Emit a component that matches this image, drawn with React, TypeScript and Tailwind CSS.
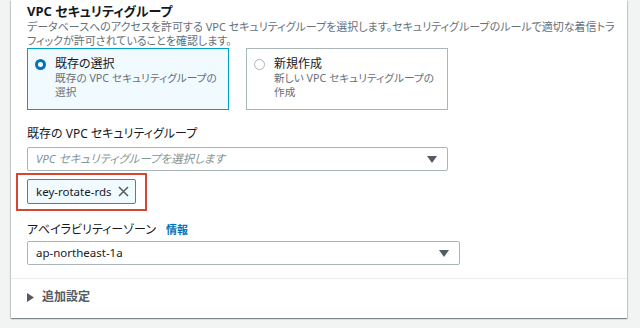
import React from 'react';

const Radio = ({ checked }: { checked: boolean }) => (
  <span
    className={`mt-[3px] w-[11px] h-[11px] shrink-0 rounded-full bg-white ${
      checked ? 'border-[3px] border-[#0073bb]' : 'border border-[#aab7b8]'
    }`}
  />
);

const Caret = () => (
  <svg width="10" height="7" viewBox="0 0 10 7" className="shrink-0">
    <path d="M0 0h10L5 7z" fill="#545b64" />
  </svg>
);

const App = () => {
  return (
    <div className="w-[640px] h-[328px] overflow-hidden bg-[#f2f3f3] pl-[11px] font-['Noto_Sans','Noto_Sans_CJK_JP',sans-serif] [font-feature-settings:'palt']">
      <div className="w-[616px] h-[318px] bg-white shadow-[0_1px_1px_0_rgba(0,28,36,0.3),1px_1px_1px_0_rgba(0,28,36,0.15),-1px_1px_1px_0_rgba(0,28,36,0.15)] flex flex-col">
        <div className="px-4 pt-[2px]">
          {/* VPC security group */}
          <div className="text-[13px] leading-[18px] font-bold text-[#16191f]">VPC セキュリティグループ</div>
          <div className="text-[11px] leading-[14px] text-[#687078] whitespace-nowrap">
            データベースへのアクセスを許可する VPC セキュリティグループを選択します。セキュリティグループのルールで適切な着信トラ
            <br />
            フィックが許可されていることを確認します。
          </div>

          <div className="flex gap-[17px]">
            <div className="w-[202px] h-[62px] border border-[#00a1c9] bg-[#f1faff] flex gap-[9px] pl-[7px] pt-[7px]">
              <Radio checked />
              <div className="whitespace-nowrap">
                <div className="text-[12px] leading-[15px] text-[#16191f]">既存の選択</div>
                <div className="text-[10.7px] leading-[14px] text-[#687078]">既存の VPC セキュリティグループの<br />選択</div>
              </div>
            </div>
            <div className="w-[202px] h-[62px] border border-[#aab7b8] bg-white flex gap-[9px] pl-[7px] pt-[7px]">
              <Radio checked={false} />
              <div className="whitespace-nowrap">
                <div className="text-[12px] leading-[15px] text-[#16191f]">新規作成</div>
                <div className="text-[10.7px] leading-[14px] text-[#687078]">新しい VPC セキュリティグループの<br />作成</div>
              </div>
            </div>
          </div>

          {/* existing group select */}
          <div className="text-[12px] leading-[16px] text-[#16191f] mt-[16px]">既存の VPC セキュリティグループ</div>
          <div className="w-[421px] h-[24px] mt-[5px] border border-[#aab7b8] rounded-[2px] flex items-center justify-between pl-[8px] pr-[10px]">
            <span className="text-[11.5px] italic text-[#879596]">VPC セキュリティグループを選択します</span>
            <Caret />
          </div>

          <div className="ml-[-11px] mt-[2px] w-[131px] border-2 border-[#d6472f] pl-[9px] pt-[4px] pb-[5px]">
            <div className="w-[109px] h-[25px] border border-[#00a1c9] bg-[#f1faff] rounded-[2px] flex items-center justify-between pl-[8px] pr-[6px]">
              <span className="text-[11.5px] text-[#16191f]">key-rotate-rds</span>
              <svg width="11" height="11" viewBox="0 0 11 11">
                <path d="M1 1l9 9M10 1l-9 9" stroke="#545b64" strokeWidth="1.5" />
              </svg>
            </div>
          </div>

          {/* availability zone */}
          <div className="h-[16px] flex items-center gap-[10px] mt-[11px]">
            <span className="text-[12px] leading-[16px] text-[#16191f]">アベイラビリティーゾーン</span>
            <span className="text-[11px] leading-[16px] font-bold text-[#0073bb]">情報</span>
          </div>
          <div className="w-[433px] h-[24px] mt-[3px] border border-[#aab7b8] rounded-[2px] flex items-center justify-between pl-[8px] pr-[10px]">
            <span className="text-[11.5px] text-[#16191f]">ap-northeast-1a</span>
            <Caret />
          </div>
        </div>

        <div className="mt-[13px] border-t border-[#eaeded]" />

        <div className="px-4 pt-[10px] h-[26px] flex items-center gap-[8px]">
          <svg width="7" height="9" viewBox="0 0 7 9">
            <path d="M0 0l7 4.5L0 9z" fill="#545b64" />
          </svg>
          <span className="text-[12px] leading-[16px] font-bold text-[#545b64]">追加設定</span>
        </div>
      </div>
    </div>
  );
};

export default App;
